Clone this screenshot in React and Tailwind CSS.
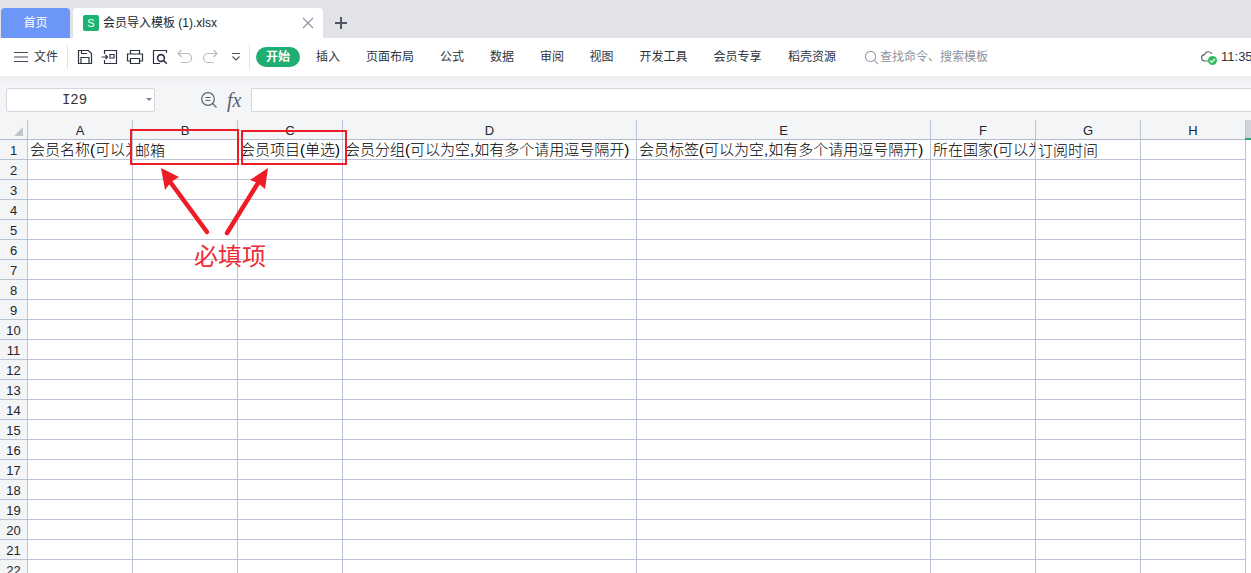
import React from 'react';

const ui = 'font-["Liberation_Sans","Noto_Sans_CJK_SC",sans-serif]';

const menus = [
  { label: '插入', w: 'w-[50px]' },
  { label: '页面布局', w: 'w-[74px]' },
  { label: '公式', w: 'w-[50px]' },
  { label: '数据', w: 'w-[50px]' },
  { label: '审阅', w: 'w-[50px]' },
  { label: '视图', w: 'w-[49px]' },
  { label: '开发工具', w: 'w-[75px]' },
  { label: '会员专享', w: 'w-[73px]' },
  { label: '稻壳资源', w: 'w-[76px]' },
];

const columns = [
  { name: 'A', w: 'w-[105px]', text: '会员名称(可以为空)' },
  { name: 'B', w: 'w-[105px]', text: '邮箱', low: true },
  { name: 'C', w: 'w-[105px]', text: '会员项目(单选)' },
  { name: 'D', w: 'w-[294px]', text: '会员分组(可以为空,如有多个请用逗号隔开)' },
  { name: 'E', w: 'w-[294px]', text: '会员标签(可以为空,如有多个请用逗号隔开)' },
  { name: 'F', w: 'w-[105px]', text: '所在国家(可以为空)' },
  { name: 'G', w: 'w-[105px]', text: '订阅时间', low: true },
  { name: 'H', w: 'w-[105px]', text: '' },
];

const rows = Array.from({ length: 22 }, (_, i) => i + 1);

const ToolIcon = ({ children, className = 'text-[#2c3140]' }) => (
  <svg width="18" height="18" viewBox="0 0 18 18" fill="none" stroke="currentColor" strokeWidth="1.2" className={`shrink-0 ${className}`}>
    {children}
  </svg>
);

const TabBar = () => (
  <div className="flex h-[38px] shrink-0 items-end bg-[#e1e3e7] pl-px">
    <div className="flex h-[30px] w-[69px] items-center justify-center rounded-t-[4px] bg-[#6c96f8] text-[12px] text-white">首页</div>
    <div className="ml-[3px] flex h-[30px] w-[250px] items-center rounded-t-[4px] bg-white pl-[10px] pr-[9px]">
      <div className="flex h-[16px] w-[16px] items-center justify-center rounded-[2px] bg-[#1db272] text-[11px] leading-none text-white">S</div>
      <span className="ml-[4px] flex-1 text-[12px] text-[#23262e]">会员导入模板 (1).xlsx</span>
      <svg width="12" height="12" viewBox="0 0 12 12" stroke="#8d93a0" strokeWidth="1.1">
        <path d="M1 1l10 10M11 1L1 11" />
      </svg>
    </div>
    <svg width="14" height="14" viewBox="0 0 14 14" stroke="#4e5666" strokeWidth="2" className="mb-[8px] ml-[11px]">
      <path d="M7 1v12M1 7h12" />
    </svg>
  </div>
);

const Toolbar = () => (
  <div className="flex h-[38px] shrink-0 items-center overflow-hidden whitespace-nowrap bg-white pl-[14px] text-[12px] text-[#30343d]">
    <svg width="14" height="12" viewBox="0 0 14 12" stroke="#444a57" strokeWidth="1.2" className="shrink-0">
      <path d="M0 1.5h14M0 6h14M0 10.5h14" />
    </svg>
    <span className="ml-[6px] shrink-0">文件</span>
    <div className="ml-[9px] h-[24px] w-px shrink-0 bg-[#dfe1e5]" />
    <div className="ml-[8px] flex shrink-0 items-center gap-[7px]">
      <ToolIcon>
        <path d="M2.5 2.5h10L15.5 5.5v10h-13zM5 15.5V9.5h8v6M5.5 2.5v3h5.5" />
      </ToolIcon>
      <ToolIcon>
        <path d="M3.5 6V2.5h12v13h-12V12M0.5 9h6M4.5 7l2 2-2 2M9 11V6.5h4V10h-3M9.5 13.5h.5" />
      </ToolIcon>
      <ToolIcon>
        <path d="M4.5 6V2.5h9V6M4 13H1.5V6h15v7H14M4.5 10.5h9v5h-9z" />
      </ToolIcon>
      <ToolIcon>
        <path d="M15.5 5V2.5h-13v13H9" />
        <circle cx="10" cy="10" r="3.4" strokeWidth="1.6" />
        <path d="M12.6 12.6l3.2 3.2" strokeWidth="1.5" />
      </ToolIcon>
      <ToolIcon className="text-[#b9bcc2]">
        <path d="M5.5 2L2 5.5 5.5 9M2 5.5h9a4.5 4.5 0 0 1 0 9H5" />
      </ToolIcon>
      <ToolIcon className="text-[#b9bcc2]">
        <path d="M12.5 2L16 5.5 12.5 9M16 5.5H7a4.5 4.5 0 0 0 0 9h6" />
      </ToolIcon>
      <svg width="10" height="10" viewBox="0 0 10 10" stroke="#50555f" strokeWidth="1.1" fill="none" className="ml-[5px] shrink-0">
        <path d="M1 1.5h8M1.5 4.5L5 8l3.5-3.5" />
      </svg>
    </div>
    <div className="ml-[8px] h-[24px] w-px shrink-0 bg-[#dfe1e5]" />
    <div className="ml-[6px] flex h-[20px] w-[44px] shrink-0 items-center justify-center rounded-full bg-[#1fae72] font-bold text-white">开始</div>
    <div className="ml-[3px] flex shrink-0">
      {menus.map((m) => (
        <span key={m.label} className={`${m.w} text-center`}>{m.label}</span>
      ))}
    </div>
    <svg width="15" height="15" viewBox="0 0 16 16" fill="none" stroke="#9aa1ae" strokeWidth="1.2" className="ml-[14px] shrink-0">
      <circle cx="7" cy="7" r="5.5" />
      <path d="M11 11l4 4" />
    </svg>
    <span className="ml-px shrink-0 text-[#8c93a1]">查找命令、搜索模板</span>
    <div className="relative ml-[213px] h-[16px] w-[16px] shrink-0">
      <svg width="15" height="13" viewBox="0 0 15 13" fill="none" stroke="#5c6270" strokeWidth="1.1" className="mt-[1px]">
        <path d="M10 11H4a3.2 3.2 0 0 1-.4-6.4A4 4 0 0 1 11 4" />
      </svg>
      <div className="absolute bottom-0 right-0 flex h-[9px] w-[9px] items-center justify-center rounded-full bg-[#2fbf5b]">
        <svg width="7" height="7" viewBox="0 0 7 7" fill="none" stroke="#fff" strokeWidth="1.1">
          <path d="M1 3.5l1.8 1.7L6 2" />
        </svg>
      </div>
    </div>
    <span className="ml-[4px] shrink-0 text-[13px]">11:35</span>
  </div>
);

const FormulaBar = () => (
  <div className="flex h-[36px] shrink-0 items-end bg-[linear-gradient(#eceef1,#f4f5f7_30%)]">
    <div className="relative ml-[6px] flex h-[24px] w-[149px] shrink-0 items-center rounded-[2px] border border-[#d5d8de] bg-white">
      <span className="w-full pr-[12px] text-center font-['Liberation_Mono',monospace] text-[14px] text-[#333]">I29</span>
      <div className="absolute right-[2px] top-[9px] h-0 w-0 border-x-[3px] border-t-[3px] border-x-transparent border-t-[#7d818a]" />
    </div>
    <div className="ml-[45px] flex h-[24px] w-[51px] shrink-0 items-center">
      <svg width="18" height="18" viewBox="0 0 18 18" fill="none" stroke="#5b6270" strokeWidth="1.2">
        <circle cx="8" cy="8" r="6.3" />
        <path d="M5.5 6.5h5M5.5 9.5h5M12.5 12.5l4 4" />
      </svg>
      <span className="ml-[9px] font-['Liberation_Serif',serif] text-[20px] italic text-[#5b6270]">fx</span>
    </div>
    <div className="h-[24px] flex-1 rounded-l-[2px] border border-r-0 border-[#d5d8de] bg-white" />
  </div>
);

const Sheet = () => (
  <div className="relative flex-1 overflow-hidden bg-white font-['Liberation_Sans','Noto_Sans_CJK_SC',sans-serif]">
    <div className="flex h-[28px] border-b border-[#b3bacd] bg-[#f4f5f7]">
      <div className="relative mt-[8px] w-[28px] shrink-0 border-r border-[#bcc3d6]">
        <div className="absolute bottom-[3px] right-[4px] h-0 w-0 border-b-[9px] border-l-[9px] border-b-[#c2c5cb] border-l-transparent" />
      </div>
      {columns.map((c) => (
        <div key={c.name} className={`${c.w} mt-[8px] flex shrink-0 items-end justify-center border-r border-[#bcc3d6] pb-px text-[13px] leading-[15px] text-[#22262e]`}>
          {c.name}
        </div>
      ))}
      <div className="mt-[8px] w-[6px] shrink-0 bg-[#cfd3da]" />
    </div>
    <div className="absolute right-0 top-[26px] h-[2px] w-[6px] bg-[#1fae72]" />
    {rows.map((r) => (
      <div key={r} className="flex h-[20px]">
        <div className="flex w-[28px] shrink-0 items-center justify-center border-r border-b border-[#bcc3d6] bg-[#f4f5f7] pt-[2px] text-[13px] text-[#22262e]">{r}</div>
        {columns.map((c) => (
          <div key={c.name} className={`${c.w} shrink-0 overflow-hidden whitespace-nowrap border-r border-b border-[#bcc3d6] pl-[2px] text-[15px] font-light leading-[19px] text-black`}>
            {r === 1 && <span className={c.low ? 'relative top-px' : ''}>{c.text}</span>}
          </div>
        ))}
      </div>
    ))}
  </div>
);

// red markup drawn over the sheet
const Annotation = () => (
  <>
    <div className="absolute left-[130px] top-[129px] h-[36px] w-[109px] border-2 border-[#ee1c25]" />
    <div className="absolute left-[241px] top-[130px] h-[35px] w-[106px] border-2 border-[#ee1c25]" />
    <svg width="150" height="80" viewBox="0 0 150 80" className="absolute left-[140px] top-[165px]">
      <path d="M67 67L31 18" stroke="#ee1c25" strokeWidth="4.5" strokeLinecap="round" />
      <path d="M21 3L39 12 31 17 25 25z" fill="#ee1c25" />
      <path d="M87 68L118 18" stroke="#ee1c25" strokeWidth="4.5" strokeLinecap="round" />
      <path d="M128 3L110 15 118 18 125 24z" fill="#ee1c25" />
    </svg>
    <span className="absolute left-[194px] top-[238px] font-['Noto_Sans_CJK_SC',sans-serif] text-[24px] leading-[34px] text-[#ee2b36]">必填项</span>
  </>
);

const App = () => (
  <div className={`relative flex h-[573px] w-[1251px] flex-col overflow-hidden bg-white ${ui}`}>
    <TabBar />
    <Toolbar />
    <FormulaBar />
    <Sheet />
    <Annotation />
  </div>
);

export default App;
